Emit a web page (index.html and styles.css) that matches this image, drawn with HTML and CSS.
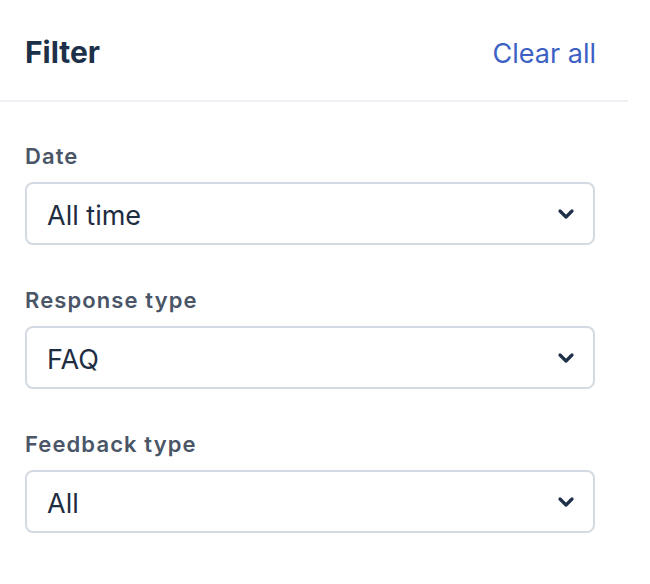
FILE: index.html
```html
<!DOCTYPE html>
<html lang="en">
<head>
<meta charset="utf-8">
<title>Filter</title>
<link rel="stylesheet" href="styles.css">
</head>
<body>
<aside class="panel">
  <header class="panel-header">
    <h1 class="panel-title">Filter</h1>
    <a class="clear-link" href="#">Clear all</a>
  </header>
  <div class="panel-body">
    <div class="field">
      <label class="field-label">Date</label>
      <div class="select">
        <span class="select-value">All time</span>
        <svg class="chevron" viewBox="0 0 18 12" width="18" height="12" aria-hidden="true"><path d="M3 3 L9 9 L15 3" fill="none" stroke="currentColor" stroke-width="3.2" stroke-linecap="round" stroke-linejoin="round"/></svg>
      </div>
    </div>
    <div class="field">
      <label class="field-label">Response type</label>
      <div class="select">
        <span class="select-value">FAQ</span>
        <svg class="chevron" viewBox="0 0 18 12" width="18" height="12" aria-hidden="true"><path d="M3 3 L9 9 L15 3" fill="none" stroke="currentColor" stroke-width="3.2" stroke-linecap="round" stroke-linejoin="round"/></svg>
      </div>
    </div>
    <div class="field">
      <label class="field-label">Feedback type</label>
      <div class="select">
        <span class="select-value">All</span>
        <svg class="chevron" viewBox="0 0 18 12" width="18" height="12" aria-hidden="true"><path d="M3 3 L9 9 L15 3" fill="none" stroke="currentColor" stroke-width="3.2" stroke-linecap="round" stroke-linejoin="round"/></svg>
      </div>
    </div>
  </div>
</aside>
</body>
</html>
```

FILE: styles.css
```css
html, body {
  margin: 0;
  padding: 0;
  background: #ffffff;
}
body {
  font-family: "Inter", "Liberation Sans", sans-serif;
  color: #1d2f45;
}
.panel {
  width: 628px;
}
.panel-header {
  height: 102px;
  box-sizing: border-box;
  padding: 4px 32px 0 25px;
  display: flex;
  align-items: center;
  justify-content: space-between;
  border-bottom: 2px solid #edf0f4;
}
.panel-title {
  margin: 0;
  font-size: 30px;
  font-weight: 700;
  color: #1c3149;
}
.clear-link {
  padding-top: 3px;
  font-size: 27px;
  color: #3c61c4;
  text-decoration: none;
}
.panel-body {
  padding: 40px 33px 0 25px;
  display: flex;
  flex-direction: column;
  gap: 41px;
}
.field {
  display: flex;
  flex-direction: column;
  gap: 11px;
}
.field-label {
  font-size: 22px;
  line-height: 29px;
  font-weight: 600;
  letter-spacing: 1.1px;
  color: #4a5667;
}
.select {
  height: 63px;
  box-sizing: border-box;
  border: 2px solid #d3dae3;
  border-radius: 8px;
  padding: 3px 18px 0 20px;
  display: flex;
  align-items: center;
  justify-content: space-between;
}
.select-value {
  font-size: 27px;
  color: #1e2d42;
}
.chevron {
  color: #1e3148;
  margin-top: -2px;
}
```
